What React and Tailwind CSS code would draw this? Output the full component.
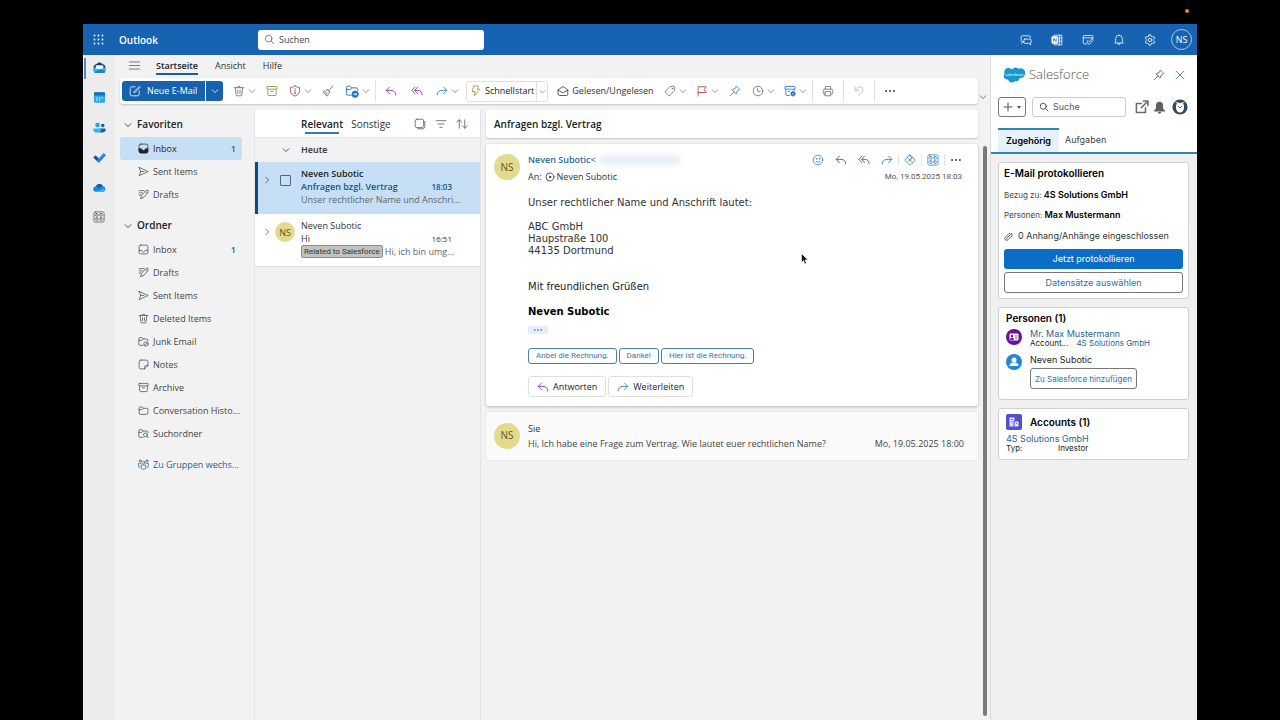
import clsx from 'clsx';

function Glyph({ children, className = 'size-3', width = 1.3 }) {
  return (
    <svg viewBox="0 0 20 20" fill="none" stroke="currentColor" strokeWidth={width} strokeLinecap="round" strokeLinejoin="round" className={clsx('shrink-0', className)} aria-hidden="true">
      {children}
    </svg>
  );
}

const ChevronDown = ({ className = 'size-2' }) => (
  <Glyph className={className} width={2}><path d="M3 7l7 7 7-7" /></Glyph>
);
const ChevronRight = ({ className = 'size-2' }) => (
  <Glyph className={className} width={2}><path d="M7 3l7 7-7 7" /></Glyph>
);
const Reply = ({ className }) => (
  <Glyph className={className} width={1.5}><path d="M7.5 3.5L2 9l5.5 5.5M2.5 9H10c5 0 8 3 8 7.5" /></Glyph>
);
const ReplyAll = ({ className }) => (
  <Glyph className={className} width={1.5}><path d="M6.5 3.5L1.5 9l5 5.5M11 3.5L6 9l5 5.5M6.5 9H12c4 0 6.5 3 6.5 7.5" /></Glyph>
);
const Forward = ({ className }) => (
  <Glyph className={className} width={1.5}><path d="M12.5 3.5L18 9l-5.5 5.5M17.5 9H10c-5 0-8 3-8 7.5" /></Glyph>
);
const Trash = ({ className }) => (
  <Glyph className={className}><path d="M2 4.5h16M7.5 4.5a2.5 2.5 0 015 0M4 4.5l1.2 12a1.5 1.5 0 001.5 1.5h6.6a1.5 1.5 0 001.5-1.5l1.2-12M8.2 8.5v5.5M11.8 8.5v5.5" /></Glyph>
);
const Archive = ({ className }) => (
  <Glyph className={className}><rect x="1.5" y="2.5" width="17" height="4.5" rx="1" /><path d="M3 7v8.5a2 2 0 002 2h10a2 2 0 002-2V7M8 10.5h4" /></Glyph>
);
const Pin = ({ className }) => (
  <Glyph className={className}><path d="M12.5 2l5.5 5.5-1.5 1-2.5 1.2-2 5.3-7-7 5.3-2L11.5 3.5zM8.5 11.5L2 18" /></Glyph>
);
const Send = ({ className }) => (
  <Glyph className={className}><path d="M2 2.5L18.5 10 2 17.5 4.8 10zM4.8 10H11" /></Glyph>
);
const Drafts = ({ className }) => (
  <Glyph className={className}><path d="M17.5 2.5a1.8 1.8 0 00-2.5 0l-8 8.5-2.5 6.5L11 15l7-8.5c.8-1.2.5-3-.5-4zM13.5 4.5l3 3M2 3h9M2 7h6M2 11h3" /></Glyph>
);
const Inbox = ({ className }) => (
  <Glyph className={className}><rect x="2" y="2" width="16" height="16" rx="3" /><path d="M2 11.5h4.500c.5 2 1.8 3 3.5 3s3-1 3.5-3H18" /></Glyph>
);
const InboxFilled = ({ className }) => (
  <Glyph className={className}><rect x="2" y="2" width="16" height="16" rx="3" /><path d="M2 10.5h4.5c.5 2 1.800 3 3.5 3s3-1 3.5-3H18V15a3 3 0 01-3 3H5a3 3 0 01-3-3z" fill="currentColor" /></Glyph>
);
const Folder = ({ className }) => (
  <Glyph className={className}><path d="M2 5.5a2 2 0 012-2h3.5L10 6h6a2 2 0 012 2v7a2 2 0 01-2 2H4a2 2 0 01-2-2zM2 8.5h5.5L10 6" /></Glyph>
);
const JunkFolder = ({ className }) => (
  <Glyph className={className}><path d="M9 17H3.5A2 2 0 011.5 15V5a2 2 0 012-2H7l2.5 2.5H16a2 2 0 012 2V9M1.5 8H7l2.5-2.5" /><circle cx="14.5" cy="14.5" r="4" /><path d="M17.3 11.7l-5.6 5.6" /></Glyph>
);
const SearchFolder = ({ className }) => (
  <Glyph className={className}><path d="M9 17H3.5A2 2 0 011.5 15V5a2 2 0 012-2H7l2.5 2.5H16a2 2 0 012 2V9M1.5 8H7l2.5-2.5" /><circle cx="13.5" cy="12.5" r="3.5" /><path d="M16 15l3 3" /></Glyph>
);
const Note = ({ className }) => (
  <Glyph className={className}><path d="M5 2h10a3 3 0 013 3v7l-6 6H5a3 3 0 01-3-3V5a3 3 0 013-3zM18 12h-4a2 2 0 00-2 2v4" /></Glyph>
);
const Groups = ({ className }) => (
  <Glyph className={className}><circle cx="10" cy="6.500" r="2.500" /><circle cx="4" cy="3.500" r="2" /><circle cx="16" cy="3.500" r="2" /><path d="M6 11h8v4a4 4 0 01-8 0zM5 8H1v4.5a3.500 3.500 0 002.500 3.500M15 8h4v4.500a3.500 3.500 0 01-2.500 3.500" /></Glyph>
);
const Search = ({ className, width }) => (
  <Glyph className={className} width={width}><circle cx="8.5" cy="8.5" r="6" /><path d="M13 13l5 5" /></Glyph>
);
const Dots = ({ className = 'size-3' }) => (
  <svg viewBox="0 0 20 20" fill="currentColor" className={clsx('shrink-0', className)} aria-hidden="true">
    <circle cx="3.5" cy="10" r="1.6" /><circle cx="10" cy="10" r="1.6" /><circle cx="16.5" cy="10" r="1.6" />
  </svg>
);
const Apps = ({ className }) => (
  <Glyph className={className}><rect x="1.5" y="1.5" width="17" height="17" rx="2.5" /><rect x="4.5" y="4.5" width="4" height="4" rx="1" /><rect x="11.5" y="4.5" width="4" height="4" rx="1" /><rect x="4.5" y="11.5" width="4" height="4" rx="1" /><rect x="11.5" y="11.5" width="4" height="4" rx="1" /></Glyph>
);

function ToolButton({ label, className, children }) {
  return (
    <button aria-label={label} className={clsx('flex h-5 w-[22px] shrink-0 items-center justify-center', className)}>
      {children}
    </button>
  );
}

function SplitButton({ label, className, children }) {
  return (
    <button aria-label={label} className={clsx('flex h-5 shrink-0 items-center gap-[3px] pr-[3px] pl-1', className)}>
      {children}
      <span className="text-[#777]"><ChevronDown /></span>
    </button>
  );
}

const Divider = ({ className = 'h-[22px]' }) => <div className={clsx('w-px shrink-0 bg-[#e2e2e2]', className)} />;

const Avatar = ({ className = 'size-[26px] text-[10px]' }) => (
  <span className={clsx('flex shrink-0 items-center justify-center rounded-full bg-[#e4da8e] font-medium text-[#5c541f]', className)}>NS</span>
);

function TopBar() {
  return (
    <header className="flex h-[31px] shrink-0 items-center bg-[#1763b1] text-white">
      <button aria-label="Apps" className="ml-[9px] flex size-3 items-center justify-center">
        <svg viewBox="0 0 11 11" className="size-[11px]" fill="currentColor">
          {[1.5, 5.5, 9.5].map((y) => [1.5, 5.5, 9.5].map((x) => <circle key={`${x}-${y}`} cx={x} cy={y} r="0.9" />))}
        </svg>
      </button>
      <span className="ml-[15px] w-[139px] pt-px text-[10px] font-semibold">Outlook</span>
      <label className="flex h-5 w-[226px] items-center gap-1 rounded-[3px] bg-white px-[6px] text-[#555]">
        <Search className="size-[11px]" />
        <input aria-label="Suchen" placeholder="Suchen" className="w-full bg-transparent text-[9px] text-[#333] outline-none placeholder:text-[#444]" />
      </label>
      <div className="ml-auto flex items-center gap-[19px] pr-[5px]">
        <button aria-label="Teams-Chat"><Glyph><path d="M6 13H3.5A1.5 1.5 0 012 11.5v-7A1.5 1.5 0 013.5 3h12A1.5 1.5 0 0117 4.5V6M2.500 16l3-3M8 8.5h9a1.5 1.5 0 011.5 1.5v4a1.5 1.5 0 01-1.5 1.5L18 18l-3.5-2.5H8A1.5 1.5 0 016.5 14v-4A1.5 1.5 0 018 8.500z" /></Glyph></button>
        <button aria-label="OneNote"><Glyph><path d="M5 3.500V2h13v16H5v-2M14 2v16M14 7h4M14 12h4" /><rect x="1.5" y="4.500" width="10" height="11" rx="1" fill="currentColor" /><path d="M4.5 12.500v-5l4 5v-5" stroke="#1763b1" /></Glyph></button>
        <button aria-label="Mein Tag"><Glyph><path d="M8 16.5H4A2 2 0 012 14.5v-10a2 2 0 012-2h12a2 2 0 012 2V8M2 6.5h16M8.5 12.500l1.500-1.500 2 2 4.500-4.500L18.500 10.500 12 17.500l-3.500-3.500z" /></Glyph></button>
        <button aria-label="Benachrichtigungen"><Glyph><path d="M10 2a5.5 5.5 0 00-5.5 5.5V12L3 15h14l-1.5-3V7.5A5.5 5.5 0 0010 2zM8 15.5a2 2 0 004 0" /></Glyph></button>
        <button aria-label="Einstellungen"><Glyph><circle cx="10" cy="10" r="2.8" /><path d="M8.5 1.5h3l.6 2.5 1.8 1 2.5-.7 1.500 2.600-1.900 1.900v2.400l1.900 1.900-1.500 2.600-2.500-.7-1.800 1-.6 2.500h-3L7.900 16l-1.800-1-2.500.7-1.500-2.600L4 11.200V8.800L2.100 6.900l1.500-2.600 2.500.7 1.800-1z" /></Glyph></button>
        <button className="-ml-1 flex size-[21px] items-center justify-center rounded-full border border-[#a9c8e8] text-[9px]">NS</button>
      </div>
    </header>
  );
}

function AppRail() {
  return (
    <nav className="flex w-8 shrink-0 flex-col items-center gap-[17px] bg-[#ececec] pt-[6px]">
      <a href="#mail" aria-label="E-Mail" className="relative">
        <span className="absolute top-[-3px] left-[-9px] h-[21px] w-[2px] bg-[#5b88b5]" />
        <svg viewBox="0 0 20 20" className="size-[13px]">
          <path d="M1 9c0-1.500.7-2.500 2-3.300L8.500 2.500a3 3 0 013 0L17 5.700c1.300.8 2 1.800 2 3.300v5.500a4 4 0 01-4 4H5a4 4 0 01-4-4z" fill="#123f78" />
          <path d="M4 8.500a2 2 0 012-2h8a2 2 0 012 2V13H4z" fill="#f2fbff" />
          <path d="M1 9.500l9 4.500 9-4.500v5a4 4 0 01-4 4H5a4 4 0 01-4-4z" fill="#32b8f2" />
          <path d="M2 17l10-4.500 6.500 3A4 4 0 0115 18.500H5A4 4 0 012 17z" fill="#1b83d0" />
        </svg>
      </a>
      <a href="#calendar" aria-label="Kalender">
        <svg viewBox="0 0 20 20" className="size-[13px]">
          <rect x="1.5" y="2" width="17" height="16" rx="2" fill="#29a9e8" />
          <path d="M1.5 7V4a2 2 0 012-2h13a2 2 0 012 2v3z" fill="#1473b8" />
          <path d="M5 10.5h2M9 10.5h2M13 10.5h2M5 14h2M9 14h2" stroke="#e8f7ff" strokeWidth="1.8" />
        </svg>
      </a>
      <a href="#people" aria-label="Kontakte">
        <svg viewBox="0 0 20 20" className="size-[13px]">
          <circle cx="7" cy="6" r="3.5" fill="#2c9fe0" /><circle cx="15" cy="7" r="2.7" fill="#155fa5" />
          <path d="M10 11.5h8a1.5 1.5 0 011.5 1.5c0 3-2 4.5-5 4.5H10z" fill="#155fa5" />
          <path d="M2 11.5h9a1.5 1.5 0 011.5 1.5c0 3.5-2.5 5-6 5s-6-1.5-6-5A1.5 1.5 0 012 11.5z" fill="#31b4f0" />
        </svg>
      </a>
      <a href="#todo" aria-label="To Do">
        <svg viewBox="0 0 20 20" className="size-[13px]">
          <path d="M.5 10L4 6.5l6.500 6.500L7 16.500z" fill="#1c4fa0" /><path d="M5.500 15L16.500 3 20 6.500 9 18.500z" fill="#2f83dd" />
        </svg>
      </a>
      <a href="#onedrive" aria-label="OneDrive">
        <svg viewBox="0 0 20 20" className="size-[13px]">
          <path d="M4.5 16.5a4 4 0 01-.3-8A6 6 0 0115.300 8a4.300 4.300 0 01.4 8.500z" fill="#1b87d6" />
          <path d="M4.200 8.500A6 6 0 0115.300 8c-3 0-4.500 1.500-5.800 3.500C8 9.500 6.500 8.500 4.200 8.500z" fill="#155a9e" />
          <path d="M4.500 16.500l11-4.500c1.500-.5 3 0 4 1a4 4 0 01-3.800 3.500z" fill="#35b5f0" />
        </svg>
      </a>
      <a href="#apps" aria-label="Weitere Apps" className="text-[#555]"><Apps className="size-3" /></a>
    </nav>
  );
}

function Ribbon() {
  return (
    <>
      <div className="flex h-[23px] shrink-0 items-center pb-[2px] pl-[13px] text-[9px] text-[#333]">
        <button aria-label="Navigation" className="w-7 text-[#666]"><Glyph className="size-[13px]"><path d="M2 4.5h16M2 10h16M2 15.5h16" /></Glyph></button>
        <button className="relative mr-[17px] font-semibold text-[#222]">
          Startseite
          <span className="absolute inset-x-0 bottom-[-3px] h-[2px] bg-[#1b5c9f]" />
        </button>
        <button className="mr-[17px]">Ansicht</button>
        <button>Hilfe</button>
      </div>
      <div className="flex shrink-0">
        <div className="ml-[5px] flex h-[26px] min-w-0 flex-1 items-center rounded-[3px] bg-white pl-[2px] shadow-[0_1px_2px_rgba(0,0,0,0.2)]">
          <button className="flex h-5 w-[83px] shrink-0 items-center gap-[6px] rounded-l-[3px] bg-[#1761ae] pl-[7px] text-[9px] text-white">
            <Glyph><path d="M10 3H4.5A2.500 2.500 0 002 5.500v10A2.500 2.500 0 004.500 18h10a2.500 2.500 0 002.500-2.500V10M17.500 2L9 10.500l-.8 2.300 2.300-.8L19 3.500" /></Glyph>
            Neue E-Mail
          </button>
          <button aria-label="Weitere Optionen" className="ml-px flex h-5 w-[17px] shrink-0 items-center justify-center rounded-r-[3px] bg-[#1761ae] text-white">
            <ChevronDown />
          </button>
          <div className="flex items-center gap-[2px] px-[2px] pl-[6px] text-[#666]">
            <SplitButton label="Löschen"><Trash /></SplitButton>
            <ToolButton label="Archivieren" className="text-[#5d9a3f]"><Archive /></ToolButton>
            <SplitButton label="Melden">
              <span className="text-[#a4373a]"><Glyph><path d="M10 1.5C12 3.3 14.5 4 17.500 4v5.500c0 4.500-3 7.500-7.500 9-4.500-1.500-7.500-4.500-7.500-9V4c3 0 5.500-.7 7.500-2.500zM10 6v5" /><circle cx="10" cy="13.5" r=".6" fill="currentColor" /></Glyph></span>
            </SplitButton>
            <ToolButton label="Aufräumen"><Glyph><path d="M18.5 1.5l-6.500 7M8.500 7l5 5M9.500 8c-2 2-4.500 2.500-7.500 2.500 1 3.500 3.500 6 7 8 1-2 1.500-4 3.500-6.500zM4.500 14l2.500-1.500M6.500 16l2-2.500" /></Glyph></ToolButton>
            <SplitButton label="Verschieben">
              <span className="text-[#1c76c0]"><Glyph className="size-[14px]"><path d="M9 16H4a2 2 0 01-2-2V5a2 2 0 012-2h3l2.500 2.500H16a2 2 0 012 2V9M2 8h5.500l2-2.500" /><circle cx="14.5" cy="14.5" r="4.500" fill="currentColor" /><path d="M12.500 14.500h4m-1.500-1.500l1.500 1.500-1.500 1.500" stroke="#fff" /></Glyph></span>
            </SplitButton>
          </div>
          <Divider />
          <div className="flex items-center gap-1 px-1 text-[#8b3d9c]">
            <ToolButton label="Antworten"><Reply /></ToolButton>
            <ToolButton label="Allen antworten"><ReplyAll /></ToolButton>
            <SplitButton label="Weiterleiten"><span className="text-[#3781b8]"><Forward /></span></SplitButton>
          </div>
          <div className="flex h-[21px] shrink-0 items-center rounded-[3px] border border-[#e0e0e0] text-[9px] text-[#222]">
            <button className="flex h-full items-center gap-[3px] border-r border-[#e0e0e0] pr-[2px] pl-[3px]">
              <span className="text-[#a58d1c]"><Glyph><path d="M7 1.500h7L12 7h4.500L7 18.500 8.500 11H4z" /></Glyph></span>
              Schnellstart
            </button>
            <button aria-label="Schnellstart-Optionen" className="flex h-full w-[10px] items-center justify-center text-[#777]"><ChevronDown className="size-[7px]" /></button>
          </div>
          <button className="flex shrink-0 items-center gap-[3px] pr-[6px] pl-[9px] text-[9px] text-[#333]">
            <Glyph><path d="M2 8l8-5.500L18 8v7.500a2 2 0 01-2 2H4a2 2 0 01-2-2zM2 8.500l8 4.500 8-4.500" /></Glyph>
            Gelesen/Ungelesen
          </button>
          <div className="flex items-center gap-[2px] pr-[2px] text-[#666]">
            <SplitButton label="Kategorisieren"><Glyph><path d="M10.500 2.500L17 2a1 1 0 011 1l-.5 6.500L9.700 17.500a1.800 1.800 0 01-2.500 0l-4.700-4.700a1.800 1.800 0 010-2.500z" /><circle cx="14" cy="6" r=".7" /></Glyph></SplitButton>
            <SplitButton label="Kennzeichnen"><span className="text-[#a4373a]"><Glyph><path d="M3.500 18.500V3H17l-3.500 4.800L17 12.500H3.500" /></Glyph></span></SplitButton>
            <ToolButton label="Anheften" className="text-[#2f7dbd]"><Pin /></ToolButton>
            <SplitButton label="Erneut erinnern"><Glyph><circle cx="10" cy="10" r="8" /><path d="M9.500 5v5.500h4" /></Glyph></SplitButton>
            <SplitButton label="Regeln">
              <span className="text-[#1c70b8]"><Glyph><rect x="1.500" y="2.500" width="17" height="4.500" rx="1" /><path d="M3 7v8.500a2 2 0 002 2h4M17 7v2M7 10.500h3" /><circle cx="15" cy="14.500" r="3.200" fill="currentColor" /><path d="M15 10v9M10.500 14.500h9M12 11.500l6 6M18 11.500l-6 6" /><circle cx="15" cy="14.500" r="1.200" fill="#fff" stroke="none" /></Glyph></span>
            </SplitButton>
          </div>
          <Divider />
          <div className="px-1 text-[#666]"><ToolButton label="Drucken"><Glyph><path d="M5.500 7V2.500h9V7M5.500 15H4a2 2 0 01-2-2V9.500A2.500 2.500 0 014.500 7h11A2.500 2.500 0 0118 9.500V13a2 2 0 01-2 2h-1.500M5.500 11h9v7h-9z" /></Glyph></ToolButton></div>
          <Divider />
          <div className="px-1 text-[#bbb]"><ToolButton label="Rückgängig"><Glyph><path d="M3.500 2.500v6.500H10M3.500 9l5-4.800a5 5 0 017 7L8.500 18" /></Glyph></ToolButton></div>
          <Divider />
          <div className="px-1 text-[#333]"><ToolButton label="Mehr"><Dots /></ToolButton></div>
        </div>
        <button aria-label="Menüband" className="mr-[3px] ml-px flex h-[26px] w-2 items-end pb-[3px] text-[#555]"><ChevronDown /></button>
      </div>
    </>
  );
}

function FolderRow({ icon: Icon, name, count, active, link }) {
  return (
    <a href="#folder" className={clsx('flex h-[23px] items-center gap-1 rounded-[3px] pl-[18px] text-[9px] whitespace-nowrap', active && 'bg-[#c7dff5] font-medium text-[#222]', link && 'text-[#2a5f8f]', !active && !link && 'text-[#444]')}>
      <Icon className="size-[11px]" />
      <span className="flex-1">{name}</span>
      {count && <span className="pr-[6px] font-semibold text-[#1f5f8f]">{count}</span>}
    </a>
  );
}

const favorites = [
  { icon: InboxFilled, name: 'Inbox', count: 1, active: true },
  { icon: Send, name: 'Sent Items' },
  { icon: Drafts, name: 'Drafts' },
];

const folders = [
  { icon: Inbox, name: 'Inbox', count: 1 },
  { icon: Drafts, name: 'Drafts' },
  { icon: Send, name: 'Sent Items' },
  { icon: Trash, name: 'Deleted Items' },
  { icon: JunkFolder, name: 'Junk Email' },
  { icon: Note, name: 'Notes' },
  { icon: Archive, name: 'Archive' },
  { icon: Folder, name: 'Conversation Histo...' },
  { icon: SearchFolder, name: 'Suchordner' },
];

function FolderPane() {
  return (
    <nav className="w-[139px] shrink-0 pr-3 pl-[5px]">
      <h2 className="flex h-[27px] items-center gap-[5px] pt-[2px] pl-1 text-[10px] font-semibold text-[#222]"><ChevronDown />Favoriten</h2>
      {favorites.map((f) => <FolderRow key={f.name} {...f} />)}
      <h2 className="mt-[7px] flex h-[25px] items-center gap-[5px] pl-1 text-[10px] font-semibold text-[#222]"><ChevronDown />Ordner</h2>
      {folders.map((f) => <FolderRow key={f.name} {...f} />)}
      <div className="mt-2"><FolderRow icon={Groups} name="Zu Gruppen wechs..." link /></div>
    </nav>
  );
}

function MessageList() {
  return (
    <section className="flex w-[227px] shrink-0 flex-col border-x border-[#e3e3e3]">
      <div className="flex h-7 items-center border-b border-[#e6e6e6] bg-white pt-px pr-3 pl-[46px] text-[10px] text-[#333]">
        <button className="relative mr-2 font-semibold text-[#222]">
          Relevant
          <span className="absolute right-1 bottom-[-2px] left-1 h-[2px] bg-[#3a77b3]" />
        </button>
        <button>Sonstige</button>
        <div className="ml-auto flex gap-[9px] text-[#555]">
          <button aria-label="Auswählen"><Glyph><rect x="2" y="2" width="14" height="14" rx="3" /><path d="M18 5.500v8.500a4 4 0 01-4 4H6" /></Glyph></button>
          <button aria-label="Filtern"><Glyph><path d="M2 4.500h16M5 10h10M8 15.500h4" /></Glyph></button>
          <button aria-label="Sortieren"><Glyph><path d="M5.500 17V3M1.500 7l4-4 4 4M14.500 3v14M10.500 13l4 4 4-4" /></Glyph></button>
        </div>
      </div>
      <h3 className="flex h-6 items-center gap-[11px] pl-[27px] text-[9px] font-semibold text-[#333]"><ChevronDown />Heute</h3>
      <article className="flex h-[52px] items-start border-l-[3px] border-[#0f4a80] bg-[#c7dff5] pt-[5px] pl-[5px] text-[9px] leading-[13px]">
        <button aria-label="Aufklappen" className="mt-[9px] mr-[9px] text-[#446]"><ChevronRight /></button>
        <input type="checkbox" aria-label="Nachricht auswählen" className="mt-2 mr-[10px] size-[11px] shrink-0 appearance-none rounded-[1px] border border-[#44698f]" />
        <div className="min-w-0 flex-1 pr-7">
          <p className="font-semibold text-[#222]">Neven Subotic</p>
          <p className="flex justify-between font-semibold text-[#1a5288]"><span>Anfragen bzgl. Vertrag</span><time className="text-[8px]">18:03</time></p>
          <p className="whitespace-nowrap text-[#5b6670]">Unser rechtlicher Name und Anschri...</p>
        </div>
      </article>
      <article className="flex h-[53px] items-start border-b border-[#e0e0e0] bg-white pt-[5px] pl-2 text-[9px] leading-[13px] text-[#333]">
        <button aria-label="Aufklappen" className="mt-[9px] mr-1 text-[#555]"><ChevronRight /></button>
        <Avatar className="mt-[3px] mr-[6px] size-5 text-[9px]" />
        <div className="min-w-0 flex-1 pr-7">
          <p>Neven Subotic</p>
          <p className="flex justify-between"><span>Hi</span><time className="text-[8px]">16:51</time></p>
          <p className="flex items-center gap-[2px] text-[#666]">
            <span className="shrink-0 rounded-[2px] border border-[#8f8f8b] bg-[#c2c2be] px-[2px] font-['Roboto',sans-serif] text-[8px] leading-[11px] text-[#333]">Related to Salesforce</span>
            <span className="whitespace-nowrap">Hi, ich bin umg...</span>
          </p>
        </div>
      </article>
    </section>
  );
}

function MessageCard() {
  return (
    <article className="mt-[6px] flex h-[262px] shrink-0 rounded-[3px] bg-white px-2 py-[9px] shadow-[0_1px_3px_rgba(0,0,0,0.25)]">
      <Avatar className="mt-px size-[26px] text-[10px]" />
      <div className="ml-2 flex min-w-0 flex-1 flex-col items-start pr-2">
        <div className="flex w-full items-center text-[9px] leading-[14px]">
          <span className="font-semibold text-[#2a6aa5]">Neven Subotic&lt;</span>
          <span className="ml-1 h-2 w-20 rounded bg-[#dfeaf5] blur-[3px]" />
          <div className="ml-auto flex items-center gap-[11px] text-[#8b3d9c]">
            <button aria-label="Reagieren" className="text-[#3579b4]"><Glyph><circle cx="10" cy="10" r="8" /><path d="M6.500 12c1.500 2.500 5.500 2.500 7 0" /><circle cx="7.300" cy="8" r=".6" fill="currentColor" /><circle cx="12.700" cy="8" r=".6" fill="currentColor" /></Glyph></button>
            <button aria-label="Antworten"><Reply /></button>
            <button aria-label="Allen antworten"><ReplyAll /></button>
            <button aria-label="Weiterleiten" className="text-[#3781b8]"><Forward /></button>
            <div className="-ml-[6px] flex items-center gap-[5px] text-[#3579b4]">
              <Divider className="h-3" />
              <button aria-label="Salesforce"><Glyph><path d="M8.500 2.500L2.500 8.500a2 2 0 000 3l6 6a2 2 0 003 0l6-6a2 2 0 000-3l-6-6a2 2 0 00-3 0zM6 6l7.500 8M7 12l7-5.500M10 2l3 6" /></Glyph></button>
              <Divider className="h-3" />
              <button aria-label="Apps"><Apps /></button>
              <Divider className="h-3" />
              <button aria-label="Mehr" className="text-[#333]"><Dots /></button>
            </div>
          </div>
        </div>
        <div className="mt-[3px] flex w-full items-center justify-between text-[9px] leading-[13px] text-[#333]">
          <span className="flex items-center gap-[2px]">An: <Glyph className="ml-px size-[10px]" width={1.6}><circle cx="10" cy="10" r="8" /><circle cx="10" cy="10" r="1.5" fill="currentColor" /></Glyph> Neven Subotic</span>
          <time className="font-['Roboto',sans-serif] text-[8px] text-[#555]">Mo, 19.05.2025 18:03</time>
        </div>
        <div className="mt-[14px] font-['DejaVu_Sans',sans-serif] text-[10px] leading-3 text-[#333]">
          <p>Unser rechtlicher Name und Anschrift lautet:</p>
          <p className="mt-3">ABC GmbH<br />Haupstraße 100<br />44135 Dortmund</p>
          <p className="mt-6 text-[#222]">Mit freundlichen Grüßen</p>
          <p className="mt-[13px] font-bold text-black">Neven Subotic</p>
        </div>
        <button aria-label="Zitierten Text anzeigen" className="mt-2 flex h-2 w-5 items-center justify-center bg-[#e3eef8] text-[#2d6397]"><Dots className="size-[10px]" /></button>
        <div className="mt-[14px] flex gap-[2px] font-['Roboto',sans-serif] text-[8px] text-[#3d74a8]">
          {['Anbei die Rechnung.', 'Danke!', 'Hier ist die Rechnung.'].map((t) => (
            <button key={t} className="h-4 rounded-[3px] border border-[#4a7fb0] px-[7px] leading-3">{t}</button>
          ))}
        </div>
        <div className="mt-3 flex gap-[2px] text-[9px] font-medium text-[#222]">
          <button className="flex h-[21px] items-center gap-1 rounded-[3px] border border-[#e0e0e0] px-2"><span className="text-[#8b3d9c]"><Reply /></span>Antworten</button>
          <button className="flex h-[21px] items-center gap-1 rounded-[3px] border border-[#e0e0e0] px-2"><span className="text-[#3781b8]"><Forward /></span>Weiterleiten</button>
        </div>
      </div>
    </article>
  );
}

function ReadingPane() {
  return (
    <main className="flex min-w-0 flex-1 flex-col pl-[5px]">
      <h1 className="flex h-7 shrink-0 items-center rounded-[3px] bg-white pl-2 text-[10px] font-semibold text-[#222] shadow-[0_1px_2px_rgba(0,0,0,0.2)]">Anfragen bzgl. Vertrag</h1>
      <MessageCard />
      <article className="mt-[6px] flex h-12 shrink-0 items-center gap-2 rounded-[3px] bg-[#fafafa] pr-[14px] pb-px pl-2 text-[9px] text-[#444] shadow-[0_0_2px_rgba(0,0,0,0.12)]">
        <Avatar />
        <div className="flex-1 leading-[15px]">
          <p className="text-[#333]">Sie</p>
          <p className="flex justify-between"><span>Hi, Ich habe eine Frage zum Vertrag. Wie lautet euer rechtlichen Name?</span><time>Mo, 19.05.2025 18:00</time></p>
        </div>
      </article>
    </main>
  );
}

function Card({ className, children }) {
  return <section className={clsx('rounded-[3px] border border-[#d0d0d0] bg-white', className)}>{children}</section>;
}

function SalesforcePanel() {
  return (
    <aside className="flex w-[207px] shrink-0 flex-col border-l border-[#dcdcdc] bg-[#f0f0f0] font-['Inter',sans-serif] text-[9px] text-[#222]">
      <div className="border-b-2 border-[#2f86b5] bg-white pl-[7px]">
        <div className="flex h-10 items-center pr-[11px] pl-[5px]">
          <svg viewBox="0 0 44 32" className="h-4 w-[22px]">
            <path d="M18 5a8 8 0 0113-1.500A9 9 0 0144 13c0 6-5 10-10.500 9A7 7 0 0124 28a8 8 0 01-14-3A7 7 0 013 14C1 8 5 2 10 2c3 0 6 1 8 3z" fill="#1798cf" />
            <text x="22" y="17" fill="#fff" fontSize="8" fontStyle="italic" fontFamily="Liberation Sans, sans-serif" textAnchor="middle">salesforce</text>
          </svg>
          <span className="ml-1 font-['Open_Sans',sans-serif] text-[13px] font-light text-[#555]">Salesforce</span>
          <button aria-label="Anheften" className="ml-auto text-[#3f5570]"><Pin /></button>
          <button aria-label="Schließen" className="ml-[9px] text-[#2a6ca8]"><Glyph><path d="M3.500 3.500l13 13M16.500 3.500l-13 13" /></Glyph></button>
        </div>
        <div className="mt-[2px] flex h-5 items-center pr-[9px]">
          <button aria-label="Neu" className="mr-[6px] flex h-5 w-7 shrink-0 items-center justify-center gap-1 rounded-[3px] border border-[#777] text-[#555]">
            <Glyph className="size-[10px]" width={2}><path d="M10 2v16M2 10h16" /></Glyph>
            <svg viewBox="0 0 4 3" className="h-[3px] w-1" fill="currentColor"><path d="M0 0h4L2 3z" /></svg>
          </button>
          <label className="mr-[9px] flex h-5 min-w-0 flex-1 items-center gap-1 rounded-[3px] border border-[#ccc] px-[6px] text-[#555]">
            <Search className="size-[10px]" width={2} />
            <input aria-label="Suche" placeholder="Suche" className="w-full min-w-0 bg-transparent outline-none placeholder:text-[#555]" />
          </label>
          <button aria-label="In neuem Fenster öffnen" className="text-[#6b6b6b]"><Glyph className="size-[14px]" width={2.2}><path d="M9 5H2v13h13v-7M12 1.500h6.500V8M18 2l-9 9" /></Glyph></button>
          <button aria-label="Mitteilungen" className="ml-1 text-[#606060]">
            <svg viewBox="0 0 20 20" className="size-[13px]" fill="currentColor"><path d="M10 1C6.500 1 4.500 3.500 4.500 7v4.500L1.500 15v1h17v-1l-3-3.500V7C15.500 3.500 13.500 1 10 1zM7.500 17a2.500 2.500 0 005 0z" /></svg>
          </button>
          <button aria-label="Profil" className="ml-[6px]">
            <svg viewBox="0 0 20 20" className="size-4">
              <circle cx="10" cy="10" r="9.5" fill="#34495e" />
              <path d="M10 5.500C8 3 4.500 5.500 5 11c.3 3.500 2 6 5 6s4.700-2.500 5-6c.5-5.500-3-8-5-5.500z" fill="#fff" />
              <path d="M4.500 4l2.500 1M15.500 4L13 5" stroke="#c9d6e2" strokeWidth="1.500" />
              <circle cx="7.800" cy="9" r=".7" fill="#34495e" /><circle cx="12.200" cy="9" r=".7" fill="#34495e" /><ellipse cx="10" cy="10.500" rx="1.100" ry=".8" fill="#34495e" />
            </svg>
          </button>
        </div>
        <div className="mt-[11px] flex h-6">
          <button className="border-t-2 border-[#2f86b5] bg-[#e6f2fb] px-2 font-semibold text-black">Zugehörig</button>
          <button className="px-[6px] text-[#444]">Aufgaben</button>
        </div>
      </div>
      <div className="flex flex-col gap-2 pt-2 pr-2 pl-[7px]">
        <Card className="px-[5px] pt-1 pb-[5px]">
          <h2 className="text-[10px] leading-3 font-semibold text-black">E-Mail protokollieren</h2>
          <p className="mt-[10px] leading-3"><span className="text-[8px] text-[#444]">Bezug zu: </span><b className="font-semibold text-black">4S Solutions GmbH</b></p>
          <p className="mt-2 leading-3"><span className="text-[8px] text-[#444]">Personen: </span><b className="font-semibold text-black">Max Mustermann</b></p>
          <p className="mt-[9px] flex items-center gap-[5px] leading-3 text-[#333]">
            <Glyph className="size-[9px]" width={1.8}><path d="M6 14l8-8a2 2 0 00-3-2.500l-8 8a4 4 0 006 5.500l8-8a5 5 0 000-6" /></Glyph>
            0 Anhang/Anhänge eingeschlossen
          </p>
          <button className="mt-[7px] block h-5 w-full rounded-[3px] bg-[#0c6dc7] text-white">Jetzt protokollieren</button>
          <button className="mt-[3px] block h-[21px] w-full rounded-[3px] border border-[#777] text-[#2871ae]">Datensätze auswählen</button>
        </Card>
        <Card className="px-[7px] pt-1 pb-[10px]">
          <h2 className="text-[10px] leading-3 font-semibold text-black">Personen (1)</h2>
          <div className="mt-[5px] flex gap-2 leading-[10px]">
            <svg viewBox="0 0 16 16" className="size-4 shrink-0"><circle cx="8" cy="8" r="8" fill="#6a0f9c" /><rect x="3.500" y="4.500" width="9" height="7" rx="1" fill="#fff" /><circle cx="6" cy="7" r="1.200" fill="#6a0f9c" /><path d="M4.200 10.500c.5-2 3-2 3.500 0zM9 7h2.500M9 9h2.500" stroke="#6a0f9c" strokeWidth=".8" fill="#6a0f9c" /></svg>
            <div>
              <a href="#max" className="block text-[#2d5f92]">Mr. Max Mustermann</a>
              <p className="flex gap-2 text-[8px] leading-2"><span>Account...</span><a href="#gmbh" className="text-[#2d5f92]">4S Solutions GmbH</a></p>
            </div>
          </div>
          <div className="mt-[7px] flex gap-2">
            <svg viewBox="0 0 16 16" className="size-4 shrink-0"><circle cx="8" cy="8" r="8" fill="#2188d8" /><circle cx="8" cy="6" r="2.500" fill="#fff" /><path d="M3.500 12c0-3 2.500-3.500 4.500-3.500s4.500.5 4.500 3.500z" fill="#fff" /></svg>
            <div>
              <p className="leading-3">Neven Subotic</p>
              <button className="mt-[2px] h-[21px] rounded-[3px] border border-[#777] px-1 text-[8px] text-[#2871ae]">Zu Salesforce hinzufügen</button>
            </div>
          </div>
        </Card>
        <Card className="px-[7px] pt-[5px] pb-[6px]">
          <h2 className="flex items-center gap-2 text-[10px] leading-4 font-semibold text-black">
            <svg viewBox="0 0 16 16" className="size-4"><rect width="16" height="16" rx="2" fill="#5151cc" /><path d="M3.500 3.500h5v3h-1v6h-4zM8.500 7.500h4v5h-4z" fill="#dcdcfa" /><path d="M5 5.500h2M5 8h1.500M10 9.500h1" stroke="#5151cc" strokeWidth=".8" /></svg>
            Accounts (1)
          </h2>
          <a href="#gmbh" className="mt-1 block leading-[10px] text-[#2d5f92]">4S Solutions GmbH</a>
          <p className="flex text-[8px] leading-[9px]"><span className="w-[52px]">Typ:</span>Investor</p>
        </Card>
      </div>
    </aside>
  );
}

export default function App() {
  return (
    <div className="relative flex min-h-screen flex-col bg-black px-[83px] pt-6 font-['Open_Sans','Noto_Sans',sans-serif]">
      <span className="absolute top-[9px] right-[91px] size-1 rounded-full bg-[#e08a2c]" />
      <TopBar />
      <div className="flex flex-1 bg-[#f2f2f2]">
        <AppRail />
        <div className="flex min-w-0 flex-1 flex-col">
          <Ribbon />
          <div className="flex flex-1 pt-[6px]">
            <FolderPane />
            <MessageList />
            <ReadingPane />
            <div className="mt-9 mr-[3px] mb-1 ml-[5px] w-1 rounded-full bg-[#7a7a7a]" />
          </div>
        </div>
        <SalesforcePanel />
      </div>
      {/* mouse pointer */}
      <svg viewBox="0 0 8 12" className="absolute top-[253px] left-[801px] h-3 w-2">
        <path d="M.5.5v9l2-2 1.500 3.500 1.500-.7L4 7h3z" fill="#111" stroke="#fff" strokeWidth=".6" />
      </svg>
    </div>
  );
}
